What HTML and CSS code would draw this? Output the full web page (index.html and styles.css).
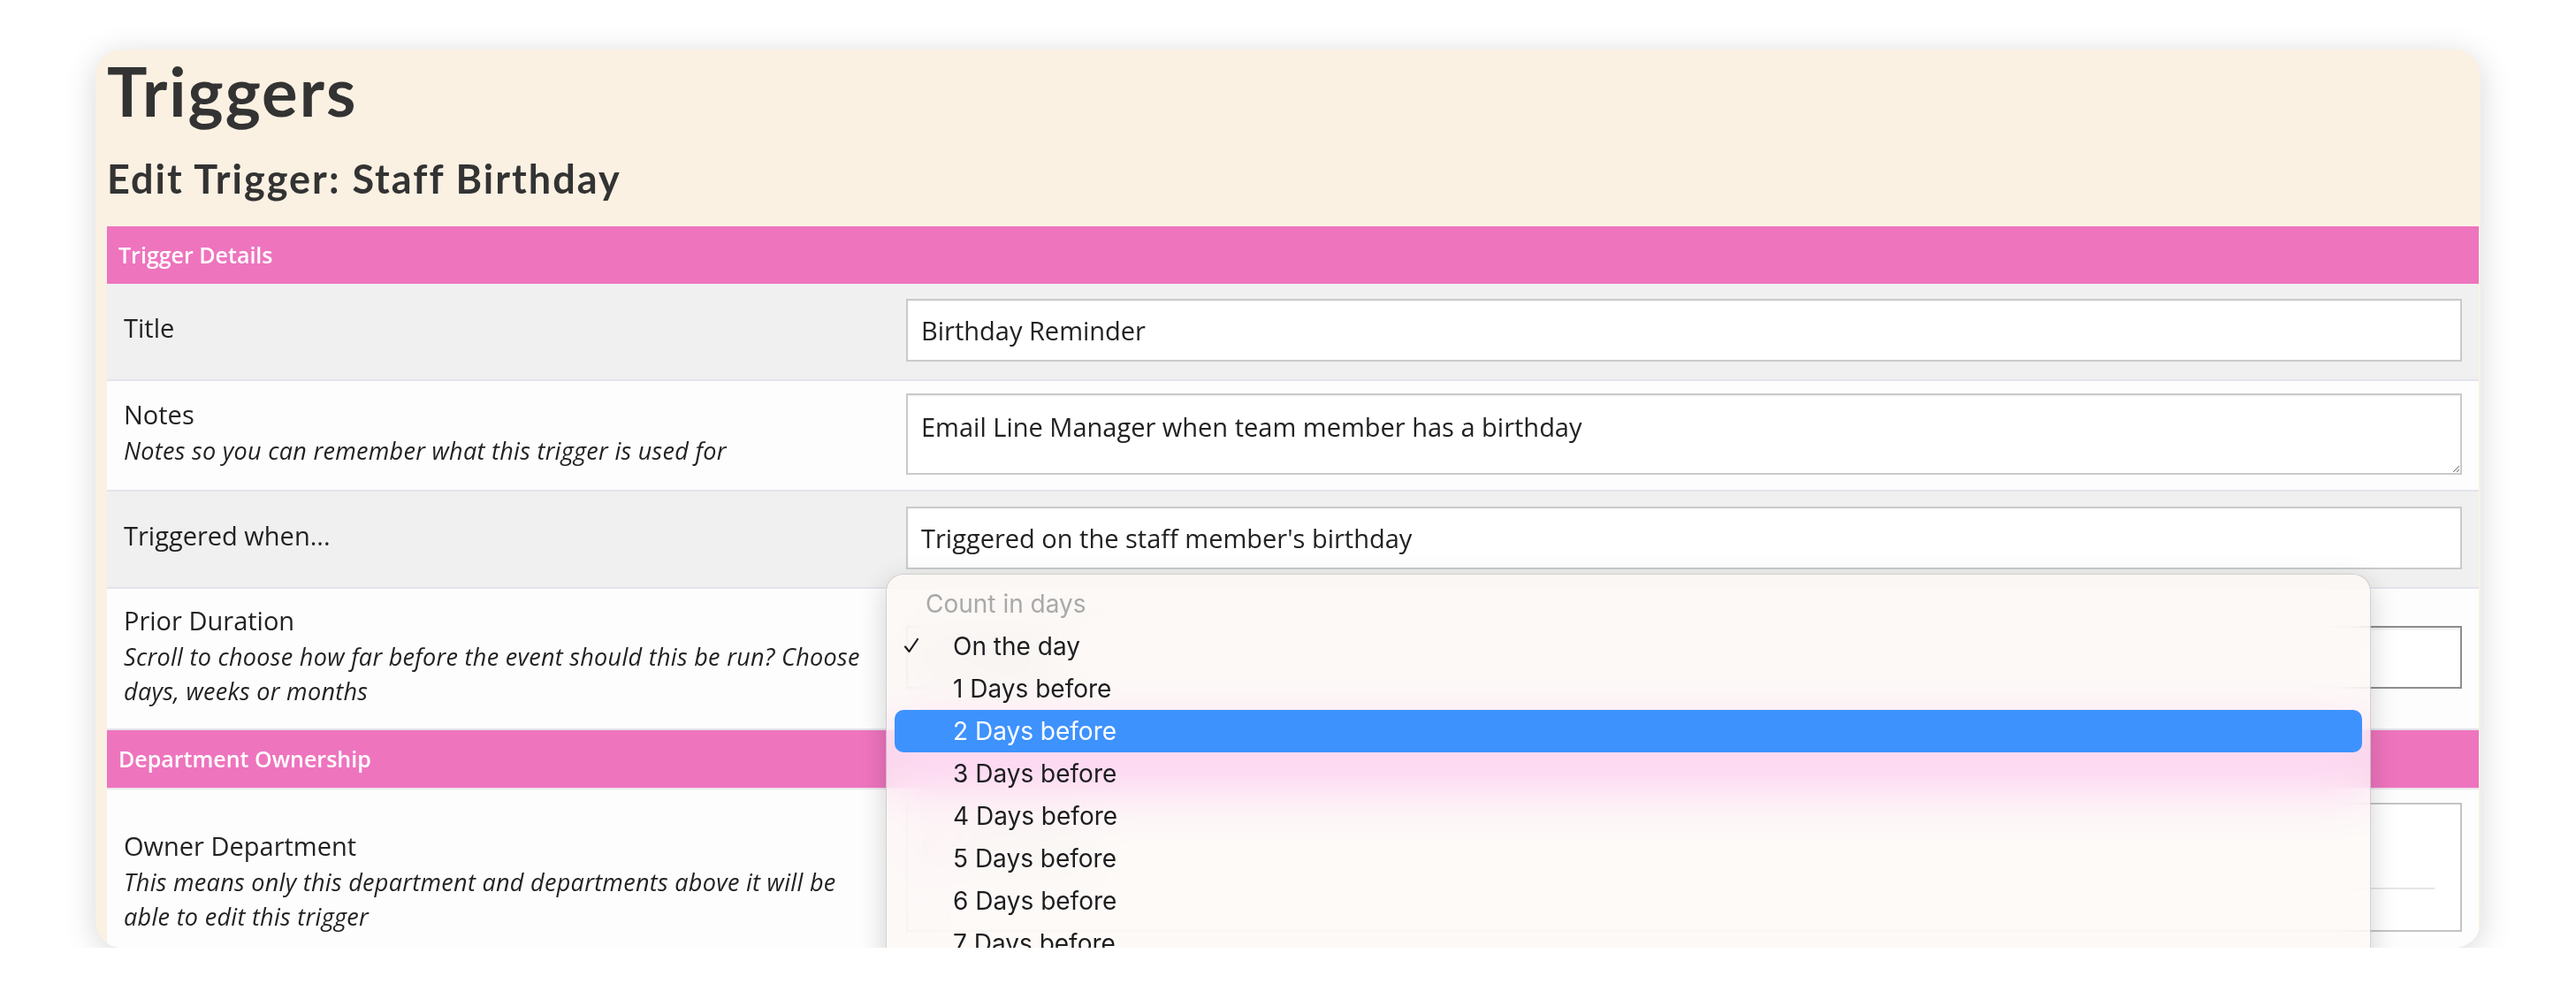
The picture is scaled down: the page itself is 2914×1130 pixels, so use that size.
FILE: index.html
```html
<!DOCTYPE html>
<html lang="en">
<head>
    <meta charset="UTF-8">
    <meta name="viewport" content="width=device-width, initial-scale=1.0">
    <title>Triggers - Edit Trigger</title>
    <link rel="stylesheet" href="styles.css">
</head>
<body>
    <div class="card">
        <h1 class="page-title">Triggers</h1>
        <h2 class="page-subtitle">Edit Trigger: Staff Birthday</h2>

        <div class="form-table">
            <div class="section">Trigger Details</div>

            <div class="row grey">
                <div class="label-cell">
                    <div class="label">Title</div>
                </div>
                <div class="field-cell">
                    <input class="text-input" type="text" value="Birthday Reminder">
                </div>
            </div>

            <div class="row">
                <div class="label-cell">
                    <div class="label">Notes</div>
                    <div class="hint">Notes so you can remember what this trigger is used for</div>
                </div>
                <div class="field-cell">
                    <textarea class="text-input notes-input">Email Line Manager when team member has a birthday</textarea>
                </div>
            </div>

            <div class="row grey">
                <div class="label-cell">
                    <div class="label">Triggered when...</div>
                </div>
                <div class="field-cell">
                    <input class="text-input" type="text" value="Triggered on the staff member's birthday">
                </div>
            </div>

            <div class="row">
                <div class="label-cell">
                    <div class="label">Prior Duration</div>
                    <div class="hint">Scroll to choose how far before the event should this be run? Choose days, weeks or months</div>
                </div>
                <div class="field-cell">
                    <div class="select-box">On the day</div>
                </div>
            </div>

            <div class="section">Department Ownership</div>

            <div class="row">
                <div class="label-cell">
                    <div class="label">Owner Department</div>
                    <div class="hint">This means only this department and departments above it will be able to edit this trigger</div>
                </div>
                <div class="field-cell owner-cell">
                    <div class="list-box">
                        <div class="list-option">
                            <span class="option-dot"></span>
                            <span>Head Office</span>
                        </div>
                    </div>
                </div>
            </div>
        </div>

        <!-- open popup for the Prior Duration select -->
        <div class="menu">
            <div class="menu-heading">Count in days</div>
            <div class="menu-item">
                <svg class="tick" viewBox="0 0 18 18" width="18" height="18">
                    <polyline points="2,10.5 6.5,16 16,2" fill="none" stroke="#1d1d1f" stroke-width="2.2" stroke-linecap="round" stroke-linejoin="round"/>
                </svg>
                On the day
            </div>
            <div class="menu-item">1 Days before</div>
            <div class="menu-item active">2 Days before</div>
            <div class="menu-item">3 Days before</div>
            <div class="menu-item">4 Days before</div>
            <div class="menu-item">5 Days before</div>
            <div class="menu-item">6 Days before</div>
            <div class="menu-item">7 Days before</div>
        </div>
    </div>
</body>
</html>
```

FILE: styles.css
```css
body {
    margin: 0;
    background-color: #ffffff;
    font-family: "Open Sans", "Liberation Sans", sans-serif;
    color: #222222;
}
.card {
    position: relative;
    box-sizing: border-box;
    width: 2698px;
    height: 1016px;
    margin: 56px 0 0 108px;
    padding: 0 2px 0 13px;
    background-color: #fbf1e3;
    border-radius: 30px;
    box-shadow: 0 6px 36px rgba(0, 0, 0, 0.16);
    overflow: hidden;
}
.page-title {
    margin: 1px 0 0;
    font-family: Lato, "Liberation Sans", sans-serif;
    font-size: 76px;
    line-height: normal;
    font-weight: 700;
    letter-spacing: 2px;
    color: #333333;
}
.page-subtitle {
    margin: 32px 0 31px;
    font-family: Lato, "Liberation Sans", sans-serif;
    font-size: 45px;
    line-height: 45px;
    font-weight: 700;
    letter-spacing: 2px;
    color: #333333;
}
.form-table {
    background-color: #fdfdfd;
}
.section {
    height: 65px;
    line-height: 65px;
    padding: 0 13px;
    background-color: #ee74be;
    color: #ffffff;
    font-size: 25px;
    font-weight: 600;
    border-bottom: 2px solid #ebe4ea;
}
.section:first-child {
    border-bottom: 0;
}
.row {
    display: grid;
    grid-template-columns: 885px 1fr;
    align-items: center;
    background-color: #fdfdfd;
    border-bottom: 2px solid #e4e4eb;
}
.row.grey {
    background-color: #f0f0f0;
}
.label-cell {
    padding: 15px 19px 23px;
}
.label {
    font-size: 29px;
    line-height: 42px;
}
.hint {
    font-size: 27px;
    line-height: 39px;
    font-style: italic;
    letter-spacing: 0.3px;
}
.field-cell {
    padding: 17px 19px 20px;
}
.text-input {
    display: block;
    box-sizing: border-box;
    width: 100%;
    height: 71px;
    margin: 0;
    padding: 0 15px;
    border: 2px solid #cacaca;
    border-radius: 0;
    background-color: #ffffff;
    box-shadow: inset 0 1px 2px rgba(0, 0, 0, 0.06);
    font-family: "Open Sans", "Liberation Sans", sans-serif;
    font-size: 29px;
    color: #222222;
    outline: none;
}
.notes-input {
    height: 92px;
    margin: -3px 0;
    padding: 16px 15px;
    resize: vertical;
}
.select-box {
    display: flex;
    align-items: center;
    box-sizing: border-box;
    height: 71px;
    padding: 0 17px;
    border: 2px solid #8e8e8e;
    background-color: #ffffff;
    box-shadow: inset 0 2px 3px rgba(0, 0, 0, 0.08);
    font-size: 29px;
}
.owner-cell {
    padding: 15px 19px 53px;
}
.list-box {
    box-sizing: border-box;
    height: 146px;
    padding: 0 29px 0 17px;
    border: 2px solid #c4c4c4;
    background-color: #ffffff;
}
.list-option {
    display: flex;
    align-items: center;
    gap: 14px;
    height: 94px;
    border-bottom: 2px solid #e6e6e6;
    font-size: 28px;
    color: #555555;
}
.option-dot {
    width: 22px;
    height: 22px;
    border-radius: 4px;
    background-color: #ee74be;
}

/* native-looking popup menu, cut off by the card's bottom edge */
.menu {
    position: absolute;
    left: 894px;
    top: 593px;
    box-sizing: border-box;
    width: 1680px;
    height: 480px;
    padding: 9px;
    border: 1px solid rgba(0, 0, 0, 0.16);
    border-radius: 20px;
    background-color: rgba(252, 248, 246, 0.74);
    backdrop-filter: blur(28px) saturate(180%);
    box-shadow: 0 8px 30px rgba(0, 0, 0, 0.18);
    font-family: Inter, "Liberation Sans", sans-serif;
    font-size: 28px;
    color: #1d1d1f;
}
.menu-heading {
    height: 48px;
    line-height: 48px;
    padding-left: 35px;
    color: #a9a9a9;
}
.menu-item {
    position: relative;
    height: 48px;
    line-height: 48px;
    padding-left: 66px;
    border-radius: 10px;
}
.menu-item.active {
    background-color: #3e92fe;
    color: #ffffff;
}
.tick {
    position: absolute;
    left: 10px;
    top: 14px;
}
```
